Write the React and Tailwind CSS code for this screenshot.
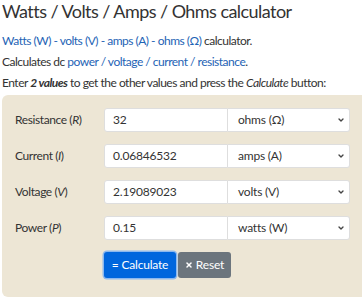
import { ChevronDown, X } from "lucide-react"

const rows = [
    { label: "Resistance", sym: "R", value: "32", unit: "ohms (Ω)" },
    { label: "Current", sym: "I", value: "0.06846532", unit: "amps (A)" },
    { label: "Voltage", sym: "V", value: "2.19089023", unit: "volts (V)" },
    { label: "Power", sym: "P", value: "0.15", unit: "watts (W)" },
]

export default function App() {
    return (
        <div className="h-[300px] overflow-hidden bg-white text-[#333] font-['Lato',sans-serif]">
            <h1 className="pl-[2px] text-[18px] leading-[22px] tracking-[-0.55px] whitespace-nowrap">Watts / Volts / Amps / Ohms calculator</h1>
            <p className="pl-[2px] mt-[10px] text-[12px] leading-[18px] tracking-[-0.5px] whitespace-nowrap">
                <span className="text-[#1e63b5]">Watts (W) - volts (V) - amps (A) - ohms (Ω)</span> calculator.
            </p>
            <p className="pl-[2px] mt-[3px] text-[12px] leading-[18px] tracking-[-0.5px] whitespace-nowrap">
                Calculates dc <span className="text-[#1e63b5]">power / voltage / current / resistance</span>.
            </p>
            <p className="pl-[2px] mt-[3px] text-[12px] leading-[18px] tracking-[-0.5px] whitespace-nowrap">
                Enter <b><i>2 values</i></b> to get the other values and press the <i>Calculate</i> button:
            </p>
            <div className="ml-[2px] mt-[3px] rounded-l-[6px] bg-[#ede6d5] pt-[13px] pb-[19px]">
                {rows.map((r) => (
                    <div key={r.label} className="flex items-center h-[24px] mb-[12px]">
                        <div className="w-[102px] pl-[13px] text-[12px] tracking-[-0.4px]">
                            {r.label} (<i>{r.sym}</i>)
                        </div>
                        <div className="flex w-[246px] h-[24px]">
                            <div className="w-[124px] bg-white border border-[#dedede] rounded-l-[3px] pl-[8px] text-[12px] leading-[22px] tracking-[-0.2px]">{r.value}</div>
                            <div className="flex-1 flex items-center justify-between bg-white border border-l-0 border-[#dedede] rounded-r-[3px] pl-[10px] pr-[4px] text-[12px] tracking-[-0.2px]">
                                <span>{r.unit}</span>
                                <ChevronDown size={8} strokeWidth={4} color="#444" />
                            </div>
                        </div>
                    </div>
                ))}
                <div className="flex gap-[2px] pl-[102px]">
                    <button className="flex items-center justify-center h-[26px] w-[72px] rounded-[3px] bg-[#0066dd] text-white text-[12px] tracking-[-0.2px] ring-[1.5px] ring-[#8cb8ee]">= Calculate</button>
                    <button className="flex items-center justify-center gap-[3px] h-[26px] w-[53px] rounded-[3px] bg-[#6c757d] text-white text-[12px] tracking-[-0.2px]">
                        <X size={8} strokeWidth={4.5} />
                        Reset
                    </button>
                </div>
            </div>
        </div>
    )
}
